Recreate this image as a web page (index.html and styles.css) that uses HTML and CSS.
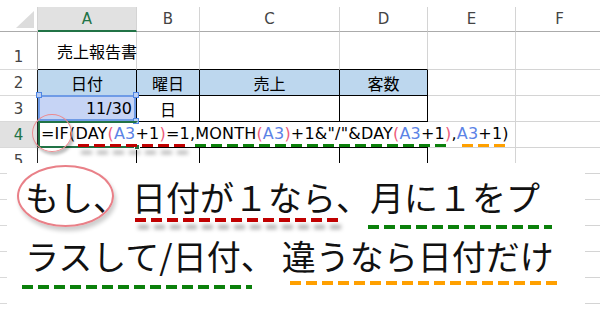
FILE: index.html
```html
<!DOCTYPE html>
<html lang="ja">
<head>
  <meta charset="UTF-8">
  <title>売上報告書 - IF DAY MONTH</title>
  <link rel="stylesheet" href="styles.css">
</head>
<body>
  <div class="sheet">
    <!-- column headers -->
    <div class="corner"><span class="tri"></span></div>
    <div class="colhead sel">A</div>
    <div class="colhead">B</div>
    <div class="colhead">C</div>
    <div class="colhead">D</div>
    <div class="colhead">E</div>
    <div class="colhead">F</div>

    <!-- row 1 -->
    <div class="rowhead r1">1</div>
    <div class="c top title">売上報告書</div>
    <div class="c top"></div>
    <div class="c top"></div>
    <div class="c top"></div>
    <div class="c"></div>
    <div class="c"></div>

    <!-- row 2 -->
    <div class="rowhead edge">2</div>
    <div class="c tb th">日付</div>
    <div class="c tb th">曜日</div>
    <div class="c tb th">売上</div>
    <div class="c tb th">客数</div>
    <div class="c"></div>
    <div class="c"></div>

    <!-- row 3 -->
    <div class="rowhead edge">3</div>
    <div class="c tb date">11/30<span class="sel-box"></span><span class="h tl"></span><span class="h tr"></span><span class="h br"></span></div>
    <div class="c tb mid">日</div>
    <div class="c tb"></div>
    <div class="c tb"></div>
    <div class="c"></div>
    <div class="c"></div>

    <!-- row 4 : cell being edited -->
    <div class="rowhead edge act">4</div>
    <div class="c tb formula"><span class="active"><span class="fill"></span></span><span class="ring">=IF</span>(<span class="fu red">DAY<span class="p">(</span><span class="ref">A3</span>+1<span class="p">)</span>=1,</span><span class="fu green">MONTH<span class="p">(</span><span class="ref">A3</span><span class="p">)</span>+1&amp;"/"&amp;DAY<span class="p">(</span><span class="ref">A3</span>+1<span class="p">)</span></span>,<span class="fu orange"><span class="ref">A3</span>+1</span>)</div>
    <div class="c"></div>
    <div class="c"></div>

    <!-- row 5 -->
    <div class="rowhead edge">5</div>
    <div class="c tb"></div>
    <div class="c tb"></div>
    <div class="c tb"></div>
    <div class="c tb"></div>
    <div class="c"></div>
    <div class="c"></div>

    <div class="rowhead">6</div>
    <div class="c"></div><div class="c"></div><div class="c"></div><div class="c"></div><div class="c"></div><div class="c"></div>
    <div class="rowhead">7</div>
    <div class="c"></div><div class="c"></div><div class="c"></div><div class="c"></div><div class="c"></div><div class="c"></div>
    <div class="rowhead">8</div>
    <div class="c"></div><div class="c"></div><div class="c"></div><div class="c"></div><div class="c"></div><div class="c"></div>
    <div class="rowhead">9</div>
    <div class="c"></div><div class="c"></div><div class="c"></div><div class="c"></div><div class="c"></div><div class="c"></div>
    <div class="rowhead">10</div>
    <div class="c"></div><div class="c"></div><div class="c"></div><div class="c"></div><div class="c"></div><div class="c"></div>
  </div>

  <div class="caption">
    <div class="line">
      <span class="oval">もし、</span><span class="u red first">日付が１なら、</span><span class="u green g1">月に１をプ</span>
    </div>
    <div class="line">
      <span class="u green g2">ラスして/日付、</span><span class="u orange">違うなら日付だけ</span>
    </div>
  </div>
</body>
</html>
```

FILE: styles.css
```css
body {
  margin: 0;
  width: 600px;
  height: 312px;
  overflow: hidden;
  position: relative;
  background: #fff;
  color: #000;
  font-family: "DejaVu Sans", "Noto Sans CJK JP", sans-serif;
}
.sheet {
  display: grid;
  grid-template-columns: 38px 99px 63px 140px 88px 88px 88px;
  grid-template-rows: 25px 38px repeat(9, 26px) 8px;
  padding-top: 7px;
  height: 312px;
  box-sizing: border-box;
  overflow: hidden;
}
.sheet > div {
  box-sizing: border-box;
  overflow: visible;
}

/* headers */
.corner {
  display: flex;
  justify-content: flex-end;
  align-items: flex-end;
  padding: 0 3px 3px 0;
  border-right: 1px solid #d4d4d4;
  border-bottom: 1px solid #ababab;
}
.tri {
  width: 18px;
  height: 17px;
  background: #dcdcdc;
  clip-path: polygon(100% 0, 100% 100%, 0 100%);
}
.colhead {
  display: flex;
  align-items: center;
  justify-content: center;
  font-size: 15px;
  color: #444;
  border-right: 1px solid #d4d4d4;
  border-bottom: 1px solid #ababab;
}
.colhead.sel {
  background: #e1e1e1;
  color: #217346;
  border-bottom: 2px solid #217346;
}
.rowhead {
  display: flex;
  align-items: center;
  justify-content: center;
  font-size: 15px;
  color: #444;
  border-right: 1px solid #ababab;
  border-bottom: 1px solid #d9d9d9;
}
.rowhead.r1 {
  align-items: flex-end;
  padding-bottom: 3px;
}
.rowhead.edge {
  border-right-color: #222;
}
.rowhead.act {
  background: #e1e1e1;
  color: #217346;
}

/* cells */
.c {
  display: flex;
  align-items: center;
  font-size: 16px;
  white-space: nowrap;
  border-right: 1px solid #d4d4d4;
  border-bottom: 1px solid #d4d4d4;
}
.c.top {
  border-bottom-color: #000;
}
.c.tb {
  border-right-color: #000;
  border-bottom-color: #000;
}
.title {
  padding-left: 19px;
}
.th {
  background: #bdd7ee;
  justify-content: center;
}
.mid {
  justify-content: center;
}
.date {
  position: relative;
  justify-content: flex-end;
  padding-right: 4px;
  background: #c6d4f5;
}
.sel-box {
  position: absolute;
  top: -1px;
  left: 0;
  right: 0;
  bottom: 0;
  border: 2px solid #6f9be6;
}
.h {
  position: absolute;
  width: 4px;
  height: 4px;
  background: #b9cdf3;
  border: 1px solid #4f86e4;
}
.h.tl { left: -2px; top: -4px; }
.h.tr { right: -3px; top: -4px; }
.h.br { right: -3px; bottom: -3px; }

/* formula being typed in A4 */
.c.formula {
  display: block;
  grid-column: span 4;
  position: relative;
  z-index: 1;
  border-right: none;
  padding: 3px 0 0 3px;
  line-height: 18px;
  letter-spacing: 0.2px;
}
.active {
  position: absolute;
  left: 0;
  top: -1px;
  width: 100px;
  bottom: -1px;
  box-sizing: border-box;
  border: 2px solid #217346;
  border-right-color: transparent;
}
.fill {
  position: absolute;
  right: -4px;
  bottom: -4px;
  width: 4px;
  height: 4px;
  background: #217346;
  border: 1px solid #fff;
}
.ref {
  color: #5b83e6;
}
.p {
  color: #ee5d7c;
}
.ring {
  position: relative;
}
.ring::before {
  content: '';
  position: absolute;
  left: -9px;
  right: -3px;
  top: -10px;
  bottom: -9px;
  border: 1.5px solid #ec8a8f;
  border-radius: 50%;
  box-shadow: 2px 3px 3px rgba(0, 0, 0, 0.25);
}
.fu {
  position: relative;
}
.fu::after {
  content: '';
  position: absolute;
  left: 3px;
  right: 8px;
  bottom: -4px;
  height: 3px;
  background: repeating-linear-gradient(90deg, var(--dash) 0 11px, transparent 11px 16px);
}
.fu.green::after {
  left: 0;
  right: 0;
}
.fu.orange::after {
  left: 5px;
  right: -7px;
}
.red { --dash: #c00000; }
.green { --dash: #0b800b; }
.orange { --dash: #ffa000; }
.fu.red::after,
.u.red::after {
  filter: drop-shadow(3px 7px 2px rgba(0, 0, 0, 0.35));
}

/* big caption over the sheet */
.caption {
  position: absolute;
  left: 7px;
  top: 163px;
  width: 578px;
  bottom: 0;
  background: #fff;
  padding: 4px 0 0 18px;
  box-sizing: border-box;
}
.line {
  font-family: "Noto Sans CJK JP", sans-serif;
  font-size: 34px;
  line-height: 59px;
  white-space: nowrap;
  color: #111;
}
.oval {
  position: relative;
}
.oval::before {
  content: '';
  position: absolute;
  left: -8px;
  right: 13px;
  top: -7px;
  bottom: -6px;
  border: 2px solid #e98088;
  border-radius: 50%;
  box-shadow: 2px 4px 4px rgba(0, 0, 0, 0.2);
}
.u {
  position: relative;
}
.u::after {
  content: '';
  position: absolute;
  left: 3px;
  right: 32px;
  bottom: -1px;
  height: 4px;
  background: repeating-linear-gradient(90deg, var(--dash) 0 11px, transparent 11px 16px);
}
.first {
  margin-left: 5px;
}
.u.g1::after {
  left: -2px;
  right: -12px;
  bottom: -8px;
}
.u.g2::after {
  left: -3px;
  right: 23px;
  bottom: -9px;
}
.u.orange {
  margin-left: 7px;
}
.u.orange::after {
  left: 8px;
  right: -4px;
  bottom: -5px;
}
```
